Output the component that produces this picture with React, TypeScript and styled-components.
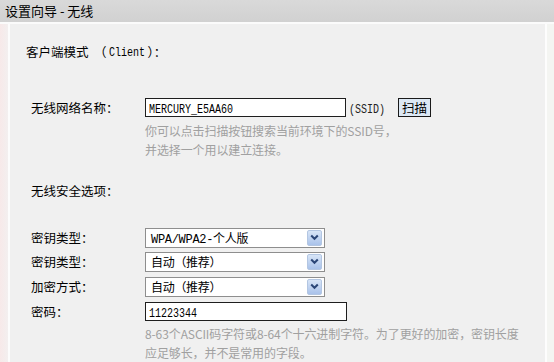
import React from 'react'
import styled, { createGlobalStyle } from 'styled-components'

const GlobalStyle = createGlobalStyle`
  html, body {
    margin: 0;
    padding: 0;
    background: #f0f0f0;
  }
  body {
    font-family: "Noto Sans CJK SC", "Liberation Sans", sans-serif;
  }
`

const Page = styled.div`
  width: 554px;
  height: 362px;
  overflow: hidden;
  background: #f0f0f0;
  color: #000;
  font-size: 12px;
`

const Header = styled.div`
  height: 22px;
  line-height: 22px;
  padding-left: 5px;
  font-size: 13px;
  background: linear-gradient(#d9d9d9, #d1d1d1);
  border-bottom: 2px solid #fbfbfb;
`

const Body = styled.div`
  display: flex;
  height: 338px;
`

const LeftEdge = styled.div`
  width: 8px;
  background: linear-gradient(to right, #f7e9e9, #f3efef);
  border-right: 2px solid #fcfcfc;
`

const RightEdge = styled.div`
  width: 7px;
  border-left: 2px solid #fdfdfd;
  background: #f4f5f2;
`

const Main = styled.div`
  flex: 1;
  padding-left: 16px;
  display: flex;
  flex-direction: column;
`

const SectionTitle = styled.div<{ $top: number; $indent?: number }>`
  display: flex;
  align-items: center;
  margin-top: ${(p) => p.$top}px;
  padding-left: ${(p) => p.$indent ?? 0}px;
  height: 20px;
  line-height: 20px;
  font-size: 12.5px;
  white-space: pre;
`

// narrow, tall monospace text like the old bitmap font
const NarrowBox = styled.span<{ $w: number }>`
  display: inline-block;
  width: ${(p) => p.$w}px;
  overflow: visible;
  white-space: nowrap;
`

const Narrow = styled.span<{ $size: number }>`
  display: inline-block;
  font-family: "Liberation Mono", monospace;
  font-size: ${(p) => p.$size}px;
  transform: scaleX(${(p) => 6 / (p.$size * 0.6)});
  transform-origin: 0 50%;
`

const Row = styled.div<{ $top: number }>`
  display: flex;
  align-items: center;
  height: 20px;
  margin-top: ${(p) => p.$top}px;
`

const Label = styled.div`
  width: 119px;
  padding-left: 5px;
  box-sizing: border-box;
  font-size: 12.5px;
`

const TextBox = styled.div<{ $w: number }>`
  width: ${(p) => p.$w}px;
  height: 19px;
  box-sizing: border-box;
  background: #fff;
  border: 1px solid #1e1e1e;
  padding-left: 3px;
  line-height: 17px;
  overflow: hidden;
  white-space: nowrap;
`

const Suffix = styled.span`
  width: 52px;
  padding-left: 3px;
  box-sizing: border-box;
  color: #222;
`

const ScanButton = styled.button`
  width: 33px;
  height: 19px;
  padding: 0;
  box-sizing: border-box;
  border: 1px solid #1a1a1a;
  background: #dce8f4;
  font-family: "Noto Sans CJK SC", sans-serif;
  font-size: 12.5px;
  line-height: 16px;
  color: #000;
`

const Hint = styled.div<{ $top: number }>`
  margin-top: ${(p) => p.$top}px;
  margin-left: 119px;
  color: #a0a0a0;
  font-size: 12px;
  line-height: 19px;
  letter-spacing: -0.1px;
`

const Select = styled.div`
  width: 180px;
  height: 20px;
  box-sizing: border-box;
  display: flex;
  align-items: center;
  background: #fff;
  border: 1px solid #8e8e8e;
  padding: 1px 2px 1px 5px;
  font-family: "Liberation Mono", "Noto Sans CJK SC", monospace;
  font-size: 12px;
`

const SelectText = styled.span`
  flex: 1;
  letter-spacing: -0.3px;
`

const ArrowBox = styled.div`
  width: 15px;
  height: 16px;
  box-sizing: border-box;
  border: 1px solid #b3c6e2;
  border-radius: 2px;
  background: linear-gradient(#d8e5f7, #a9c2ea);
  display: flex;
  align-items: center;
  justify-content: center;
`

function Chevron() {
  return (
    <svg width="9" height="7" viewBox="0 0 9 7">
      <path d="M1.2 1.5 L4.5 4.8 L7.8 1.5" fill="none" stroke="#2b4677" strokeWidth="2" />
    </svg>
  )
}

function Dropdown({ value }: { value: string }) {
  return (
    <Select>
      <SelectText>{value}</SelectText>
      <ArrowBox>
        <Chevron />
      </ArrowBox>
    </Select>
  )
}

export default function App() {
  return (
    <Page>
      <GlobalStyle />
      <Header>设置向导 - 无线</Header>
      <Body>
        <LeftEdge />
        <Main>
          <SectionTitle $top={18}>
            {'客户端模式  （ '}
            <NarrowBox $w={38}>
              <Narrow $size={12.5}>Client</Narrow>
            </NarrowBox>
            {'）：'}
          </SectionTitle>

          <Row $top={36}>
            <Label>无线网络名称：</Label>
            <TextBox $w={201}>
              <Narrow $size={13}>MERCURY_E5AA60</Narrow>
            </TextBox>
            <Suffix>
              <Narrow $size={12.5}>(SSID)</Narrow>
            </Suffix>
            <ScanButton>扫描</ScanButton>
          </Row>
          <Hint $top={3}>
            你可以点击扫描按钮搜索当前环境下的SSID号，
            <br />
            并选择一个用以建立连接。
          </Hint>

          <SectionTitle $top={22} $indent={5}>
            无线安全选项：
          </SectionTitle>

          <Row $top={27}>
            <Label>密钥类型：</Label>
            <Dropdown value="WPA/WPA2-个人版" />
          </Row>
          <Row $top={4}>
            <Label>密钥类型：</Label>
            <Dropdown value="自动（推荐）" />
          </Row>
          <Row $top={5}>
            <Label>加密方式：</Label>
            <Dropdown value="自动（推荐）" />
          </Row>
          <Row $top={5}>
            <Label>密码：</Label>
            <TextBox $w={202}>
              <Narrow $size={13}>11223344</Narrow>
            </TextBox>
          </Row>
          <Hint $top={3}>
            8-63个ASCII码字符或8-64个十六进制字符。为了更好的加密，密钥长度
            <br />
            应足够长，并不是常用的字段。
          </Hint>
        </Main>
        <RightEdge />
      </Body>
    </Page>
  )
}
